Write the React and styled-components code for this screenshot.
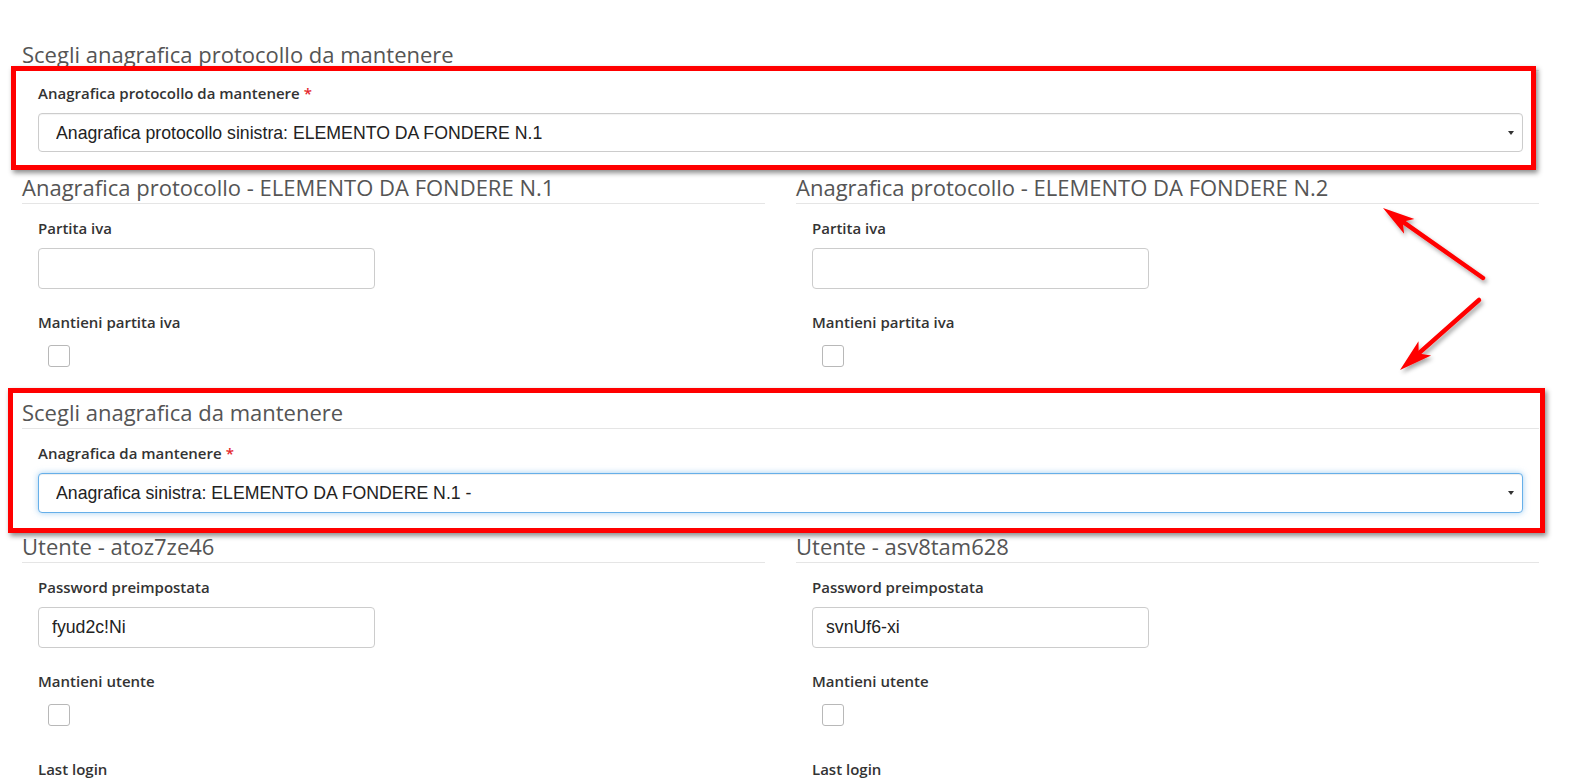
import React from "react";
import styled, { createGlobalStyle } from "styled-components";

const GlobalStyle = createGlobalStyle`
  html, body {
    margin: 0;
    padding: 0;
    background: #fff;
  }
  body {
    font-family: "Open Sans", "Liberation Sans", sans-serif;
    color: #333;
  }
  * {
    box-sizing: border-box;
  }
`;

const Page = styled.div`
  position: relative;
  height: 784px;
  overflow: hidden;
  padding: 42px 31px 0 22px;
`;

const Title = styled.h3`
  margin: 0;
  padding-bottom: 4px;
  font-size: 22px;
  font-weight: 400;
  line-height: 24px;
  color: #555;
  white-space: nowrap;
  border-bottom: 1px solid #e5e5e5;
`;

const Section = styled.section`
  position: relative;
`;

const Columns = styled.div`
  display: grid;
  grid-template-columns: 743px 743px;
  column-gap: 31px;
`;

const Group = styled.div`
  padding: ${(p) => p.$pt ?? 14}px 16px 0;
  margin-bottom: ${(p) => p.$mb ?? 23}px;
`;

const Field = styled.div`
  margin-bottom: ${(p) => p.$mb ?? 23}px;
`;

const Label = styled.label`
  display: block;
  margin-bottom: 10px;
  font-size: 15px;
  font-weight: 600;
  line-height: 20px;
  color: #333;
`;

const Required = styled.span`
  margin-left: 4px;
  color: #e4262c;
`;

const SelectWrap = styled.div`
  position: relative;

  &::after {
    content: "";
    position: absolute;
    right: 9px;
    top: 50%;
    margin-top: -2px;
    border-left: 3px solid transparent;
    border-right: 3px solid transparent;
    border-top: 4px solid #333;
    pointer-events: none;
  }
`;

const Select = styled.select`
  appearance: none;
  display: block;
  width: 100%;
  height: ${(p) => (p.$focus ? 40 : 39)}px;
  padding: 0 24px 0 17px;
  font-family: "Liberation Sans", Arial, sans-serif;
  font-size: 17.7px;
  color: #222;
  background: #fff;
  border: 1px solid ${(p) => (p.$focus ? "#66afe9" : "#ccc")};
  border-radius: 4px;
  outline: none;
  box-shadow: ${(p) =>
    p.$focus
      ? "inset 0 1px 1px rgba(0,0,0,.075), 0 0 6px rgba(102,175,233,.6)"
      : "inset 0 1px 1px rgba(0,0,0,.05)"};
`;

const Input = styled.input`
  display: block;
  width: 337px;
  height: 41px;
  padding: 0 13px;
  font-family: "Liberation Sans", Arial, sans-serif;
  font-size: 17.7px;
  color: #222;
  background: #fff;
  border: 1px solid #ccc;
  border-radius: 4px;
  outline: none;
`;

const Check = styled.input.attrs({ type: "checkbox" })`
  appearance: none;
  display: block;
  width: 22px;
  height: 22px;
  margin: 13px 0 0 10px;
  background: #fff;
  border: 1px solid #b8b8b8;
  border-radius: 3px;
`;

const Highlight = styled.div`
  position: relative;

  &::after {
    content: "";
    position: absolute;
    inset: ${(p) => p.$inset};
    border: 5px solid #ff0000;
    box-shadow: 2px 3px 5px rgba(0, 0, 0, 0.45);
    pointer-events: none;
  }
`;

const Arrows = styled.svg`
  position: absolute;
  top: 0;
  left: 0;
  pointer-events: none;
`;

const SelectField = ({ label, value, focus }) => (
  <>
    <Label>
      {label}
      <Required>*</Required>
    </Label>
    <SelectWrap>
      <Select $focus={focus} defaultValue={value}>
        <option>{value}</option>
      </Select>
    </SelectWrap>
  </>
);

const Column = ({ title, fieldLabel, fieldValue, checkLabel, extra }) => (
  <div>
    <Title>{title}</Title>
    <Group>
      <Field>
        <Label>{fieldLabel}</Label>
        <Input defaultValue={fieldValue} />
      </Field>
      <Field $mb={33}>
        <Label>{checkLabel}</Label>
        <Check />
      </Field>
      {extra && <Label>{extra}</Label>}
    </Group>
  </div>
);

const Arrow = ({ from, tip, wing1, notch, wing2 }) => (
  <g>
    <line
      x1={from[0]}
      y1={from[1]}
      x2={notch[0]}
      y2={notch[1]}
      stroke="#ff0000"
      strokeWidth="4.5"
      strokeLinecap="round"
    />
    <polygon
      points={[tip, wing1, notch, wing2].map((p) => p.join(",")).join(" ")}
      fill="#ff0000"
    />
  </g>
);

export default function App() {
  return (
    <>
      <GlobalStyle />
      <Page>
        <Title>Scegli anagrafica protocollo da mantenere</Title>
        <Highlight $inset="-5px 3px -18px -11px">
          <Group $pt={12}>
            <SelectField
              label="Anagrafica protocollo da mantenere"
              value="Anagrafica protocollo sinistra: ELEMENTO DA FONDERE N.1"
            />
          </Group>
        </Highlight>

        <Columns>
          <Column
            title="Anagrafica protocollo - ELEMENTO DA FONDERE N.1"
            fieldLabel="Partita iva"
            checkLabel="Mantieni partita iva"
          />
          <Column
            title="Anagrafica protocollo - ELEMENTO DA FONDERE N.2"
            fieldLabel="Partita iva"
            checkLabel="Mantieni partita iva"
          />
        </Columns>

        <Highlight $inset="-12px -6px -20px -14px">
          <Section>
            <Title>Scegli anagrafica da mantenere</Title>
            <Group $mb={21}>
              <SelectField
                label="Anagrafica da mantenere"
                value="Anagrafica sinistra: ELEMENTO DA FONDERE N.1 -"
                focus
              />
            </Group>
          </Section>
        </Highlight>

        <Columns>
          <Column
            title="Utente - atoz7ze46"
            fieldLabel="Password preimpostata"
            fieldValue="fyud2c!Ni"
            checkLabel="Mantieni utente"
            extra="Last login"
          />
          <Column
            title="Utente - asv8tam628"
            fieldLabel="Password preimpostata"
            fieldValue="svnUf6-xi"
            checkLabel="Mantieni utente"
            extra="Last login"
          />
        </Columns>

        <Arrows width="1570" height="784" viewBox="0 0 1570 784">
          <defs>
            <filter id="shadow" x="-20%" y="-20%" width="140%" height="140%">
              <feDropShadow dx="2" dy="3" stdDeviation="2" floodColor="#000" floodOpacity="0.35" />
            </filter>
          </defs>
          <g filter="url(#shadow)">
            <Arrow
              from={[1483, 278]}
              tip={[1383, 208]}
              wing1={[1414.4, 218.9]}
              notch={[1402.7, 221.7]}
              wing2={[1404.1, 233.7]}
            />
            <Arrow
              from={[1479, 300]}
              tip={[1400, 370]}
              wing1={[1431.1, 355.4]}
              notch={[1418.7, 353.4]}
              wing2={[1418.5, 341.2]}
            />
          </g>
        </Arrows>
      </Page>
    </>
  );
}
